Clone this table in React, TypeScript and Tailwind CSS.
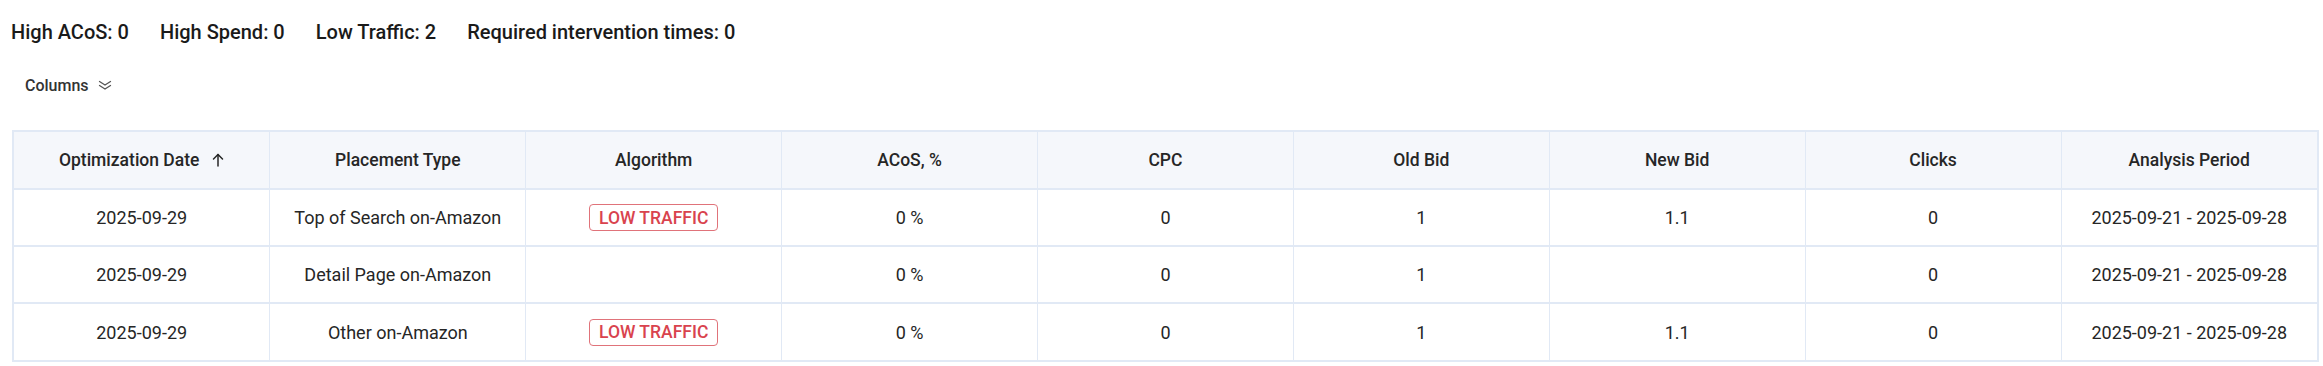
type Row = {
  date: string;
  placement: string;
  algo: string | null;
  acos: string;
  cpc: string;
  oldBid: string;
  newBid: string;
  clicks: string;
  period: string;
};

const rows: Row[] = [
  { date: "2025-09-29", placement: "Top of Search on-Amazon", algo: "LOW TRAFFIC", acos: "0 %", cpc: "0", oldBid: "1", newBid: "1.1", clicks: "0", period: "2025-09-21 - 2025-09-28" },
  { date: "2025-09-29", placement: "Detail Page on-Amazon", algo: null, acos: "0 %", cpc: "0", oldBid: "1", newBid: "", clicks: "0", period: "2025-09-21 - 2025-09-28" },
  { date: "2025-09-29", placement: "Other on-Amazon", algo: "LOW TRAFFIC", acos: "0 %", cpc: "0", oldBid: "1", newBid: "1.1", clicks: "0", period: "2025-09-21 - 2025-09-28" },
];

const headers = ["Placement Type", "Algorithm", "ACoS, %", "CPC", "Old Bid", "New Bid", "Clicks", "Analysis Period"];

const App = () => {
  return <div className="bg-white min-h-screen text-[#262626] font-['Roboto',sans-serif] pl-[11px] pr-[4px]">
      {/* summary counters */}
      <div className="flex items-center gap-[31px] h-[62px] pt-px text-[20px] font-medium text-[#1a1a1a]">
        <span>High ACoS: 0</span>
        <span>High Spend: 0</span>
        <span>Low Traffic: 2</span>
        <span>Required intervention times: 0</span>
      </div>

      {/* column picker */}
      <div className="flex items-center h-[50px] pl-[14px] pb-[3px]">
        <button className="flex items-center gap-[9px] text-[16px] font-medium text-[#333]">
          Columns
          <svg width="14" height="11" viewBox="0 0 14 11" fill="none" stroke="#555" strokeWidth="1.3" strokeLinecap="round" strokeLinejoin="round">
            <path d="M1.5 1.5l5.5 3.5 5.5-3.5" />
            <path d="M1.5 5.5l5.5 3.5 5.5-3.5" />
          </svg>
        </button>
      </div>

      <div className="mt-[18px] ml-px border-2 border-[#e1e9f5]">
        <table className="w-full table-fixed border-collapse text-[18px]">
          <thead>
            <tr className="h-[57px] bg-[#f5f7fb] text-[17.5px]">
              <th className="font-medium text-center border-r border-[#e1e9f5]">
                <span className="inline-flex items-center gap-[13px]">
                  Optimization Date
                  <svg width="12" height="14" viewBox="0 0 12 14" fill="none" stroke="#262626" strokeWidth="1.5" strokeLinecap="round" strokeLinejoin="round">
                    <path d="M6 13V1.5" />
                    <path d="M1.5 6L6 1.5 10.5 6" />
                  </svg>
                </span>
              </th>
              {headers.map((h, i) => <th key={h} className={`font-medium text-center ${i < headers.length - 1 ? 'border-r border-[#e1e9f5]' : ''}`}>
                  {h}
                </th>)}
            </tr>
          </thead>
          <tbody>
            {rows.map((r, i) => <tr key={i} className="h-[57px] border-t-2 border-[#e1e9f5]">
                <td className="text-center border-r border-[#e1e9f5]">{r.date}</td>
                <td className="text-center border-r border-[#e1e9f5]">{r.placement}</td>
                <td className="text-center border-r border-[#e1e9f5]">
                  {r.algo && <span className="inline-flex items-center h-[27px] px-[9px] border border-[#e0737a] rounded-[4px] text-[#d9434e] text-[17.5px] font-medium">
                      {r.algo}
                    </span>}
                </td>
                <td className="text-center border-r border-[#e1e9f5]">{r.acos}</td>
                <td className="text-center border-r border-[#e1e9f5]">{r.cpc}</td>
                <td className="text-center border-r border-[#e1e9f5]">{r.oldBid}</td>
                <td className="text-center border-r border-[#e1e9f5]">{r.newBid}</td>
                <td className="text-center border-r border-[#e1e9f5]">{r.clicks}</td>
                <td className="text-center">{r.period}</td>
              </tr>)}
          </tbody>
        </table>
      </div>
    </div>;
};

export default App;
